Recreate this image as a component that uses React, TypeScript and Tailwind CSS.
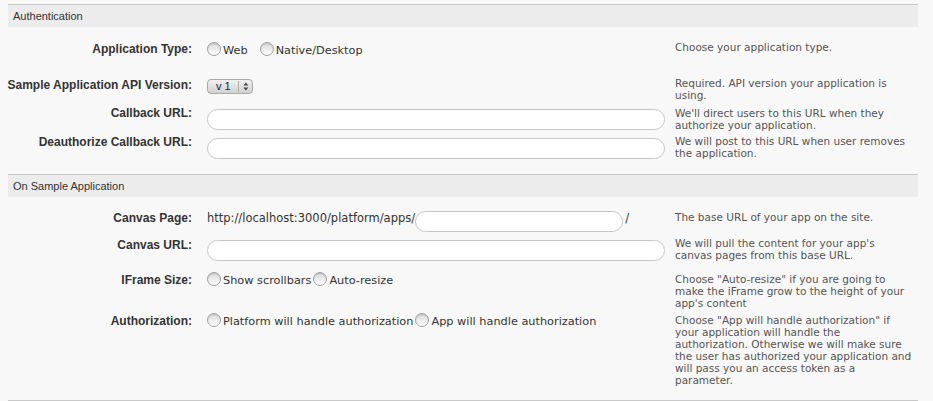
import type { ReactNode } from 'react';

const labelCls = "w-[184px] shrink-0 mr-[15px] flex justify-end whitespace-nowrap font-['Liberation_Sans',Arial,sans-serif] font-bold text-[12px] leading-[14px] text-[#333]";
const ctrlCls = "w-[458px] shrink-0 mr-[10px]";
const descCls = "flex-1 whitespace-nowrap font-['DejaVu_Sans',Verdana,sans-serif] text-[10.5px] leading-[12px] text-[#555]";
const plainText = "font-['DejaVu_Sans',Verdana,sans-serif] text-[11.3px] leading-[12px] text-[#333]";

function Radio({ label, gap = 'mr-0' }: { label: string; gap?: string }) {
  return (
    <div className={`flex items-start ${gap}`}>
      <span className="mt-[1px] w-[14px] h-[14px] shrink-0 rounded-full border border-[#a0a0a0] bg-linear-to-b from-[#d8d8d8] to-white shadow-[inset_0_1px_1px_rgba(0,0,0,0.12)]" />
      <span className={`ml-[2px] mt-[4px] ${plainText}`}>{label}</span>
    </div>
  );
}

function TextInput({ width = 'w-[458px]' }: { width?: string }) {
  return <input type="text" className={`${width} h-[21px] rounded-full border border-[#c6c6c6] bg-white px-2 text-[11px] outline-none`} />;
}

function Header({ title }: { title: string }) {
  return (
    <div className="h-[23px] border-t border-[#c8c8c8] bg-[#ececec] pl-[5px] flex items-center font-['Liberation_Sans',Arial,sans-serif] text-[11px] text-[#333]">
      {title}
    </div>
  );
}

function Row({
  label,
  children,
  desc,
  h,
  labelTop = 'mt-0',
  ctrlTop = 'mt-0',
  descTop = 'mt-0',
}: {
  label: string;
  children: ReactNode;
  desc: string[];
  h: string;
  labelTop?: string;
  ctrlTop?: string;
  descTop?: string;
}) {
  return (
    <div className={`flex items-start ${h}`}>
      <div className={`${labelCls} ${labelTop}`}>
        <span>{label}</span>
      </div>
      <div className={`${ctrlCls} ${ctrlTop}`}>{children}</div>
      <div className={`${descCls} ${descTop}`}>
        {desc.map((line, i) => (
          <div key={i}>{line}</div>
        ))}
      </div>
    </div>
  );
}

function VersionSelect() {
  return (
    <div className="w-[46px] h-[15px] rounded-[4px] border border-[#a8a8a8] bg-linear-to-b from-[#f0f0f0] to-[#d2d2d2] flex items-center shadow-[0_1px_0_rgba(255,255,255,0.6)]">
      <span className="pl-[8px] w-[31px] font-['Liberation_Sans',Arial,sans-serif] text-[11px] leading-[13px] text-[#222]">v 1</span>
      <span className="h-[11px] border-l border-[#b0b0b0]" />
      <svg width="12" height="11" viewBox="0 0 12 11" className="ml-[1px]">
        <path d="M6 1.5 L8.5 4.5 L3.5 4.5 Z" fill="#444" />
        <path d="M6 9.5 L8.5 6.5 L3.5 6.5 Z" fill="#444" />
      </svg>
    </div>
  );
}

export default function App() {
  return (
    <div className="w-[933px] h-[401px] overflow-hidden bg-[#f8f8f8] pt-[4px] px-[8px]">
      <div className="w-[910px]">
        <Header title="Authentication" />
        <div className="pt-[14px] pb-[14px]">
          <Row label="Application Type:" h="h-[36px]" labelTop="mt-[1px]" desc={['Choose your application type.']}>
            <div className="flex">
              <Radio label="Web" gap="mr-[12px]" />
              <Radio label="Native/Desktop" />
            </div>
          </Row>
          <Row
            label="Sample Application API Version:"
            h="h-[29px]"
            labelTop="mt-[1px]"
            ctrlTop="mt-[2px]"
            desc={['Required. API version your application is', 'using.']}
          >
            <VersionSelect />
          </Row>
          <Row
            label="Callback URL:"
            h="h-[29px]"
            descTop="mt-[1px]"
            desc={["We'll direct users to this URL when they", 'authorize your application.']}
          >
            <TextInput />
          </Row>
          <Row
            label="Deauthorize Callback URL:"
            h="h-[25px]"
            desc={['We will post to this URL when user removes', 'the application.']}
          >
            <TextInput />
          </Row>
        </div>

        <Header title="On Sample Application" />
        <div className="pt-[14px]">
          <Row label="Canvas Page:" h="h-[26px]" desc={['The base URL of your app on the site.']}>
            <div className={`flex items-start ${plainText} text-[11.5px]`}>
              <span className="mt-[1px]">http://localhost:3000/platform/apps/</span>
              <TextInput width="w-[208px]" />
              <span className="mt-[1px] ml-[2px]">/</span>
            </div>
          </Row>
          <Row
            label="Canvas URL:"
            h="h-[36px]"
            labelTop="mt-[1px]"
            desc={["We will pull the content for your app's", 'canvas pages from this base URL.']}
          >
            <TextInput />
          </Row>
          <Row
            label="IFrame Size:"
            h="h-[41px]"
            ctrlTop="mt-[-2px]"
            desc={['Choose "Auto-resize" if you are going to', 'make the iFrame grow to the height of your', "app's content"]}
          >
            <div className="flex">
              <Radio label="Show scrollbars" gap="mr-[2px]" />
              <Radio label="Auto-resize" />
            </div>
          </Row>
          <Row
            label="Authorization:"
            h="h-[86px]"
            ctrlTop="mt-[-2px]"
            desc={[
              'Choose "App will handle authorization" if',
              'your application will handle the',
              'authorization. Otherwise we will make sure',
              'the user has authorized your application and',
              'will pass you an access token as a',
              'parameter.',
            ]}
          >
            <div className="flex">
              <Radio label="Platform will handle authorization" gap="mr-[2px]" />
              <Radio label="App will handle authorization" />
            </div>
          </Row>
        </div>
        <div className="border-t border-[#c8c8c8]" />
      </div>
    </div>
  );
}
